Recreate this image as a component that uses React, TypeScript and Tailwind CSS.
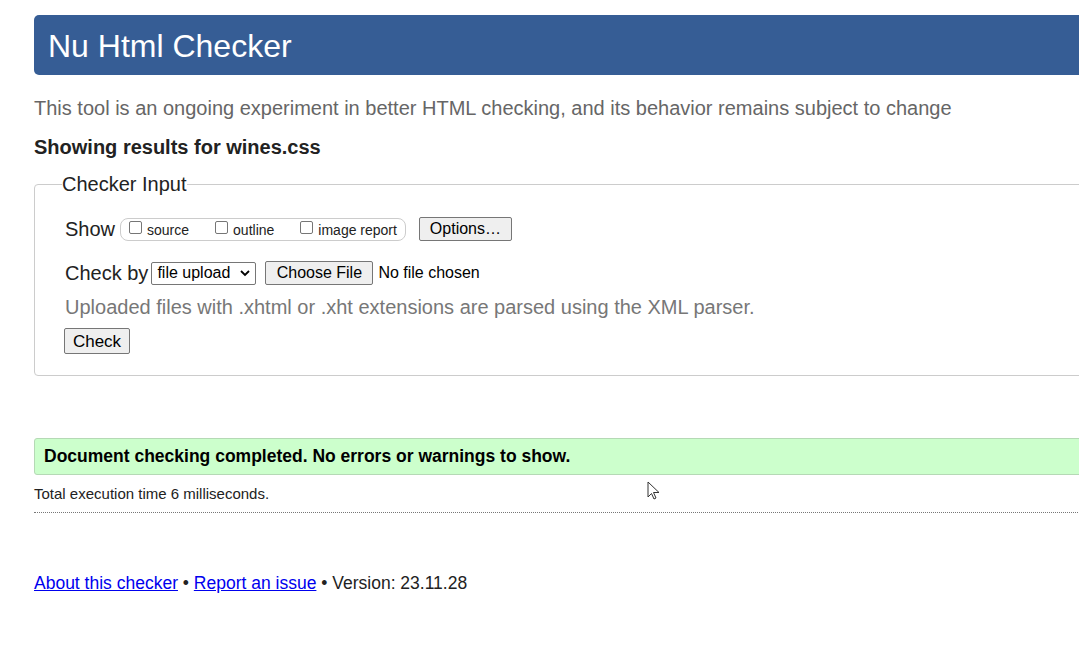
import React from 'react'

const font = { fontFamily: '"Liberation Sans", Arial, sans-serif' }

function Btn({ children, className = '' }: { children: React.ReactNode; className?: string }) {
  return (
    <span
      className={`inline-flex items-center justify-center bg-[#efefef] border border-[#767676] rounded-[2px] text-[16px] text-black leading-none ${className}`}
    >
      {children}
    </span>
  )
}

function Box({ label, gap }: { label: string; gap: string }) {
  return (
    <label className={`flex items-center ${gap}`}>
      <span className="w-[13px] h-[13px] border border-[#767676] rounded-[2px] bg-white mr-[5px] mt-[-4px]" />
      <span className="text-[14px] text-[#222] mt-[3px]">{label}</span>
    </label>
  )
}

export default function App() {
  return (
    <div className="relative w-[1079px] h-[651px] overflow-hidden bg-white text-[#222]" style={font}>
      <div className="w-[1100px] ml-[34px] pt-[15px]">
        {/* header */}
        <header className="h-[60px] bg-[#365d95] rounded-[5px] flex items-center pl-[14px]">
          <h1 className="text-white text-[32px] leading-none mt-[1px]">Nu Html Checker</h1>
        </header>

        <p className="mt-[22px] text-[20px] leading-[23px] text-[#666]">
          This tool is an ongoing experiment in better HTML checking, and its behavior remains subject to change
        </p>
        <p className="mt-[16px] text-[20px] leading-[23px] font-bold text-[#222]">Showing results for wines.css</p>

        {/* checker input */}
        <fieldset className="mt-[14px] border border-[#ccc] rounded-[4px] pl-[30px] pb-[19px] h-[203px]">
          <legend className="ml-[-3px] text-[20px] leading-[23px] text-[#222]">Checker Input</legend>

          <div className="flex items-center mt-[21px] h-[24px]">
            <span className="text-[20px] leading-none mr-[5px]">Show</span>
            <div className="flex items-center h-[23px] border border-[#ccc] rounded-[8px] pl-[8px] pr-[8px]">
              <Box label="source" gap="mr-[26px]" />
              <Box label="outline" gap="mr-[26px]" />
              <Box label="image report" gap="" />
            </div>
            <Btn className="ml-[13px] w-[93px] h-[24px]">Options…</Btn>
          </div>

          <div className="flex items-center mt-[20px] h-[24px]">
            <span className="text-[20px] leading-none mr-[3px]">Check by</span>
            <span className="flex items-center justify-between w-[105px] h-[23px] border border-[#767676] rounded-[2px] pl-[5px] pr-[4px] text-[16px] text-black">
              file upload
              <svg width="12" height="12" viewBox="0 0 12 12">
                <path d="M2 4l4 4 4-4" fill="none" stroke="#000" strokeWidth="1.8" />
              </svg>
            </span>
            <Btn className="ml-[9px] w-[108px] h-[24px]">Choose File</Btn>
            <span className="ml-[5px] text-[16px] text-black">No file chosen</span>
          </div>

          <p className="mt-[11px] text-[20px] leading-[23px] text-[#777]">
            Uploaded files with .xhtml or .xht extensions are parsed using the XML parser.
          </p>

          <Btn className="mt-[9px] ml-[-1px] w-[66px] h-[26px] text-[17px]">Check</Btn>
        </fieldset>

        {/* result */}
        <div className="mt-[62px] h-[37px] bg-[#ccffcc] border border-[#b5d9b5] rounded-[3px] flex items-center pl-[9px]">
          <span className="text-[17.5px] font-bold text-black">Document checking completed. No errors or warnings to show.</span>
        </div>
        <p className="mt-[11px] text-[15px] leading-[16px] text-[#222]">Total execution time 6 milliseconds.</p>
        <div className="mt-[10px] border-t border-dotted border-[#777]" />

        {/* footer */}
        <p className="mt-[60px] text-[17.5px] leading-[21px] text-[#222]">
          <a href="#" className="text-[#0000ee] underline">About this checker</a>
          {' • '}
          <a href="#" className="text-[#0000ee] underline">Report an issue</a>
          {' • Version: 23.11.28'}
        </p>
      </div>

      {/* mouse cursor */}
      <svg className="absolute left-[647px] top-[481px]" width="14" height="20" viewBox="0 0 14 20">
        <path d="M1 1v15l3.5-3.5 2.5 5.5 2-1-2.5-5.5H12z" fill="#fff" stroke="#333" strokeWidth="1" strokeLinejoin="round" />
      </svg>
    </div>
  )
}
